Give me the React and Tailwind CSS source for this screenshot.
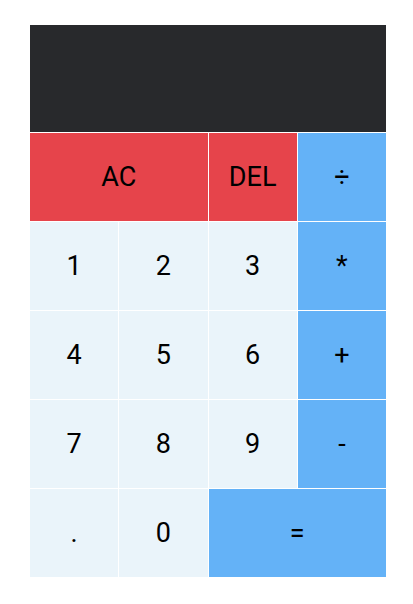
import { useState } from "react";

// ---------------- calculator keys ----------------|
const keys = [
  { label: "AC", kind: "red", span: "col-span-2" },
  { label: "DEL", kind: "red" },
  { label: "÷", kind: "op" },
  { label: "1" },
  { label: "2" },
  { label: "3" },
  { label: "*", kind: "op" },
  { label: "4" },
  { label: "5" },
  { label: "6" },
  { label: "+", kind: "op" },
  { label: "7" },
  { label: "8" },
  { label: "9" },
  { label: "-", kind: "op" },
  { label: "." },
  { label: "0" },
  { label: "=", kind: "op", span: "col-span-2" },
];

const colors = {
  red: "bg-[#e6444b]",
  op: "bg-[#64b2f7]",
  num: "bg-[#eaf4fa]",
};

export default function App() {
  const [value, setValue] = useState("");

  const handleClick = (label) => {
    if (label === "AC") return setValue("");
    if (label === "DEL") return setValue(value.slice(0, -1));
    if (label === "=") {
      try {
        // eslint-disable-next-line no-eval
        setValue(String(eval(value.replace("÷", "/"))));
      } catch {
        setValue("Error");
      }
      return;
    }
    setValue(value + label);
  };

  return (
    <div className="min-h-screen bg-white pt-[25px] pl-[30px] font-['Roboto',sans-serif]">
      <div className="w-[356px]">
        <div className="h-[107px] bg-[#28292c] flex items-end justify-end px-4 pb-3 text-white text-4xl">
          {value}
        </div>
        <div className="grid grid-cols-4 gap-px bg-white pt-px">
          {keys.map((k) => (
            <button
              key={k.label}
              onClick={() => handleClick(k.label)}
              className={`h-[88px] flex items-center justify-center text-[27px] text-black ${
                colors[k.kind || "num"]
              } ${k.span || ""}`}
            >
              {k.label}
            </button>
          ))}
        </div>
      </div>
    </div>
  );
}
